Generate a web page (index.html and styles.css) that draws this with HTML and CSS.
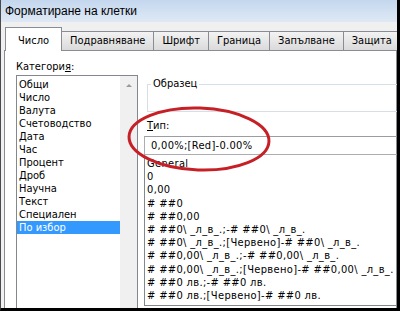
FILE: index.html
```html
<!DOCTYPE html>
<html lang="bg">
  <head>
    <meta charset="UTF-8" />
    <title>Форматиране на клетки</title>
    <link rel="stylesheet" href="styles.css">
  </head>
  <body>
    <div class="dialog">
      <div class="titlebar">Форматиране на клетки</div>
      <div class="tabs">
        <div class="tab active">Число</div>
        <div class="tab">Подравняване</div>
        <div class="tab">Шрифт</div>
        <div class="tab">Граница</div>
        <div class="tab">Запълване</div>
        <div class="tab">Защита</div>
      </div>
      <div class="panel">
        <div class="col-left">
          <div class="label">Категори<u>я</u>:</div>
          <div class="listbox">
            <ul class="cats">
              <li>Общи</li>
              <li>Число</li>
              <li>Валута</li>
              <li>Счетоводство</li>
              <li>Дата</li>
              <li>Час</li>
              <li>Процент</li>
              <li>Дроб</li>
              <li>Научна</li>
              <li>Текст</li>
              <li>Специален</li>
              <li class="selected">По избор</li>
            </ul>
            <div class="scrollbar"><span class="arrow-up"></span></div>
          </div>
        </div>
        <div class="col-right">
          <fieldset class="sample">
            <legend>Образец</legend>
          </fieldset>
          <div class="label"><u>Т</u>ип:</div>
          <div class="typebox">0,00%;[Red]-0.00%</div>
          <ul class="types">
            <li>General</li>
            <li>0</li>
            <li>0,00</li>
            <li># ##0</li>
            <li># ##0,00</li>
            <li># ##0\ _л_в_.;-# ##0\ _л_в_.</li>
            <li># ##0\ _л_в_.;[Червено]-# ##0\ _л_в_.</li>
            <li># ##0,00\ _л_в_.;-# ##0,00\ _л_в_.</li>
            <li># ##0,00\ _л_в_.;[Червено]-# ##0,00\ _л_в_.</li>
            <li># ##0 лв.;-# ##0 лв.</li>
            <li># ##0 лв.;[Червено]-# ##0 лв.</li>
          </ul>
        </div>
      </div>
      <!-- червеният кръг около полето "Тип" -->
      <svg class="mark" width="160" height="80" viewBox="0 0 160 80">
        <ellipse cx="78" cy="39" rx="70" ry="31" fill="none" stroke="#c62026" stroke-width="3" transform="rotate(2 78 39)" />
      </svg>
    </div>
  </body>
</html>
```

FILE: styles.css
```css
body {
  margin: 0;
  width: 400px;
  height: 311px;
  overflow: hidden;
  font-family: "DejaVu Sans Condensed", "DejaVu Sans", sans-serif;
  font-stretch: condensed;
  font-size: 11px;
  color: #000;
}
.dialog {
  position: relative;
  width: 400px;
  height: 311px;
  box-sizing: border-box;
  border-left: 1px solid #4a4a4a;
  border-right: 3px solid #000;
  border-bottom: 3px solid #000;
  background: #f0f0f0;
  overflow: hidden;
}
.titlebar {
  height: 22px;
  line-height: 22px;
  padding-left: 4px;
  font-family: "Liberation Sans", Arial, sans-serif;
  font-stretch: normal;
  font-size: 12px;
  background: linear-gradient(#c4d7ee, #dfe9f5);
}
.tabs {
  display: flex;
  align-items: flex-end;
  height: 22px;
  margin-top: 6px;
  padding-left: 4px;
}
.tab {
  height: 18px;
  line-height: 18px;
  padding: 0 8px;
  margin-right: -1px;
  border: 1px solid #898c95;
  border-bottom: none;
  background: linear-gradient(#f3f3f3, #dadada);
  white-space: nowrap;
}
.tab.active {
  position: relative;
  z-index: 1;
  height: 23px;
  line-height: 26px;
  padding: 0 12px;
  margin-bottom: -1px;
  background: #fff;
}
.panel {
  display: grid;
  grid-template-columns: 122px 270px;
  column-gap: 6px;
  height: 260px;
  margin-left: 3px;
  padding: 9px 0 0 11px;
  border: 1px solid #898c95;
  background: #fff;
}
.label {
  height: 14px;
  line-height: 14px;
}
.listbox {
  display: flex;
  height: 240px;
  margin-top: 1px;
  border: 1px solid #828790;
}
.cats,
.types {
  list-style: none;
  margin: 0;
  padding: 2px 0 0;
}
.cats {
  flex: 1;
}
.cats li {
  height: 13px;
  line-height: 13px;
  padding-left: 2px;
}
.cats li.selected {
  background: #3399ff;
  color: #fff;
}
.scrollbar {
  width: 17px;
  background: #f0f0f0;
  display: flex;
  justify-content: center;
}
.arrow-up {
  width: 0;
  height: 0;
  margin-top: 8px;
  border-left: 3px solid transparent;
  border-right: 3px solid transparent;
  border-bottom: 3px solid #9a9a9a;
}
.sample {
  height: 33px;
  margin: 17px 0 0 3px;
  padding: 0;
  min-inline-size: 0;
  border: 1px solid #d5dfe5;
}
.sample legend {
  margin-left: 3px;
  padding: 0 2px;
  line-height: 14px;
}
.col-right .label {
  margin-top: 7px;
  padding-left: 3px;
}
.typebox {
  height: 17px;
  line-height: 17px;
  margin-top: 3px;
  padding-left: 6px;
  letter-spacing: 0.3px;
  border: 1px solid #abadb3;
  border-top-color: #9a9da3;
}
.types {
  height: 148px;
  padding-left: 2px;
  letter-spacing: 0.35px;
  border: 1px solid #828790;
  border-top: none;
}
.types li {
  height: 13.2px;
  line-height: 13px;
  white-space: nowrap;
}
.mark {
  position: absolute;
  left: 120px;
  top: 100px;
}
```
